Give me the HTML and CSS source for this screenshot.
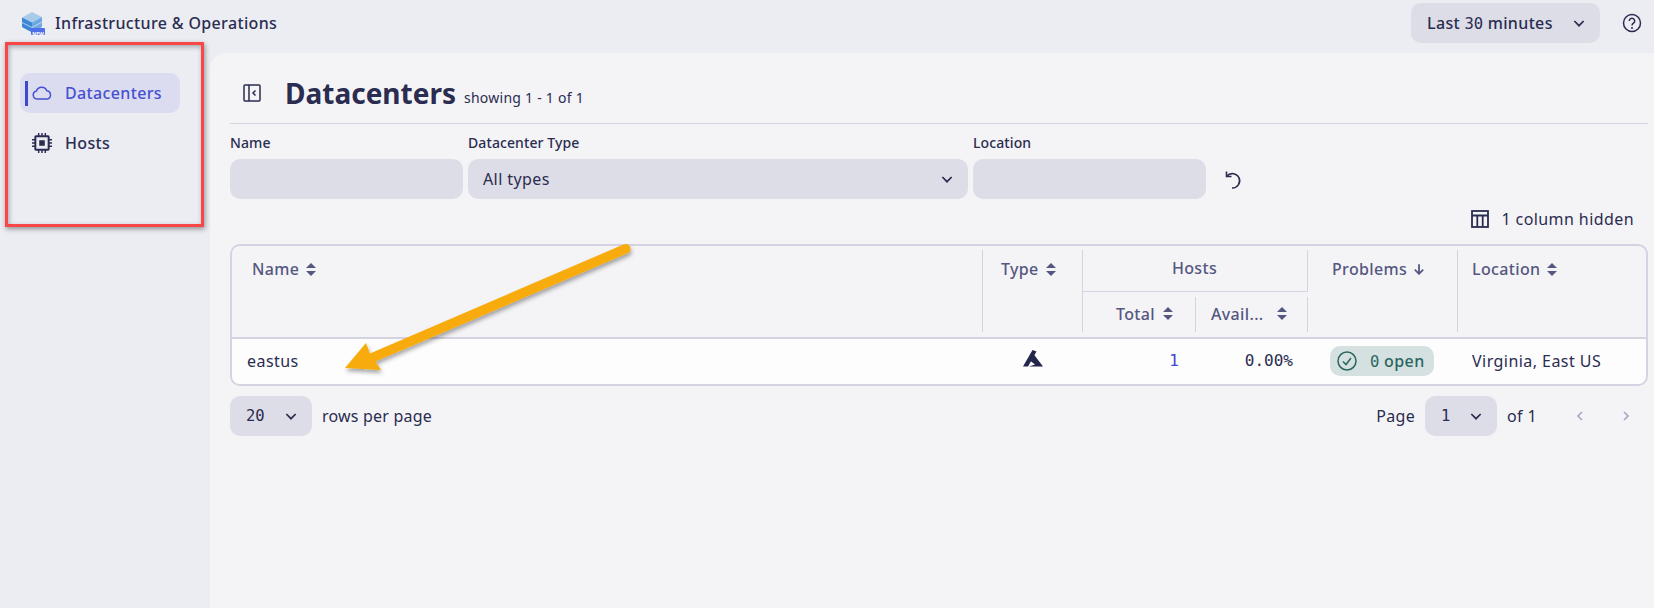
FILE: index.html
```html
<!DOCTYPE html>
<html lang="en">
<head>
<meta charset="utf-8">
<title>Infrastructure &amp; Operations</title>
<link rel="stylesheet" href="styles.css">
</head>
<body>
<header class="topbar">
  <div class="brand">
    <svg class="logo" viewBox="0 0 23 23" width="23" height="23">
      <path d="M0 5.500 10 0l10 5-10 5.500z" fill="#a8cbe8"/>
      <path d="M0 5.500l10 5v10L0 15z" fill="#3b86d6"/>
      <path d="M10 10.500l10-5.500v10l-10 5.500z" fill="#6ea8e2"/>
      <path d="M0 10.500l10 5 10-5.500" fill="none" stroke="#cfe2f4" stroke-width=".8"/>
      <rect x="9" y="16" width="14" height="7" rx="1" fill="#4f6fe8"/>
    </svg>
    <span class="new-tag">NEW</span>
    <span class="brand-name">Infrastructure &amp; Operations</span>
  </div>
  <div class="top-actions">
    <button class="select select-time"><span>Last <span class="mono">30</span> minutes</span>
      <svg class="chev" viewBox="0 0 12 12" width="16" height="16"><path d="M2.500 4.500 6 8l3.500-3.500" /></svg>
    </button>
    <svg class="help" viewBox="0 0 20 20" width="20" height="20">
      <circle cx="10" cy="10" r="8.500"/>
      <path d="M7.300 8a2.700 2.700 0 1 1 4.200 2.200c-1 .7-1.500 1.100-1.500 2.300"/>
      <circle class="dot" cx="10" cy="15" r="1"/>
    </svg>
  </div>
</header>
<div class="shell">
  <nav class="sidebar">
    <a class="nav-item active">
      <svg class="nav-icon" viewBox="0 0 20 14" width="20" height="14"><path d="M5 13a4 4 0 0 1-.6-7.900A5.500 5.500 0 0 1 14.800 4.800 4.200 4.200 0 0 1 15.500 13z"/></svg>
      <span>Datacenters</span>
    </a>
    <a class="nav-item">
      <svg class="nav-icon chip" viewBox="0 0 18 18" width="20" height="20">
        <rect x="3" y="3" width="12" height="12" rx=".5"/>
        <rect class="fill" x="6.500" y="6.500" width="5" height="5"/>
        <path d="M6 0v3M9 0v3M12 0v3M6 15v3M9 15v3M12 15v3M0 6h3M0 9h3M0 12h3M15 6h3M15 9h3M15 12h3"/>
      </svg>
      <span>Hosts</span>
    </a>
  </nav>
  <main class="main">
    <div class="title-row">
      <svg class="collapse" viewBox="0 0 18 18" width="18" height="18">
        <rect x="1" y="1" width="16" height="16" rx="1"/>
        <path d="M6 1v16M12.500 6.500 10 9l2.500 2.500"/>
      </svg>
      <h1>Datacenters</h1>
      <span class="showing">showing 1 - 1 of 1</span>
    </div>
    <div class="filters">
      <label class="field f-name"><span>Name</span><div class="input"></div></label>
      <label class="field f-type"><span>Datacenter Type</span>
        <div class="input input-select">All types
          <svg class="chev" viewBox="0 0 12 12" width="16" height="16"><path d="M2.500 4.500 6 8l3.500-3.500"/></svg>
        </div>
      </label>
      <label class="field f-name"><span>Location</span><div class="input"></div></label>
      <svg class="reset" viewBox="0 0 20 20" width="20" height="20">
        <path d="M3.500 1.500v5h5"/><path d="M3.800 6.300A7.200 7.200 0 1 1 9 18"/>
      </svg>
    </div>
    <div class="columns-row">
      <svg class="cols" viewBox="0 0 20 20" width="20" height="20">
        <rect x="2" y="2" width="16" height="16"/><path d="M2 6.500h16M7.300 6.500V18M12.700 6.500V18"/>
      </svg>
      <span>1 column hidden</span>
    </div>
    <div class="table-wrap">
      <table>
        <colgroup>
          <col class="c-name"><col class="c-type"><col class="c-total"><col class="c-avail"><col class="c-prob"><col>
        </colgroup>
        <thead>
          <tr>
            <th rowspan="2" class="sep"><span class="th-in first">Name <i class="sort"></i></span></th>
            <th rowspan="2" class="sep"><span class="th-in type">Type <i class="sort"></i></span></th>
            <th colspan="2" class="hosts sep">Hosts</th>
            <th rowspan="2" class="sep"><span class="th-in prob">Problems
              <svg class="down" viewBox="0 0 10 10" width="12" height="12"><path d="M5 1v8M1.500 5.500 5 9l3.500-3.500"/></svg></span></th>
            <th rowspan="2"><span class="th-in loc">Location <i class="sort"></i></span></th>
          </tr>
          <tr>
            <th class="sub sep"><span class="right">Total <i class="sort"></i></span></th>
            <th class="sub sep"><span class="between">Avail... <i class="sort"></i></span></th>
          </tr>
        </thead>
        <tbody>
          <tr>
            <td class="td-name">eastus</td>
            <td class="td-type">
              <svg viewBox="0 0 20 17" width="20" height="17"><path d="M9.500 0 0 16.500l5 0L13.500 1.500z" fill="#23254a"/><path d="M10.500 4 7.500 11l4.500 3.500-6 2h14z" fill="#23254a"/></svg>
            </td>
            <td class="num link mono">1</td>
            <td class="num mono">0.00%</td>
            <td class="td-prob"><span class="badge">
              <svg viewBox="0 0 20 20" width="20" height="20"><circle cx="10" cy="10" r="9"/><path d="M6 10.500 9 13.500 14 7"/></svg>
              <span class="badge-text"><span class="mono">0</span> open</span></span></td>
            <td class="td-loc">Virginia, East US</td>
          </tr>
        </tbody>
      </table>
    </div>
    <div class="pager">
      <button class="select select-rows"><span class="mono">20</span>
        <svg class="chev" viewBox="0 0 12 12" width="16" height="16"><path d="M2.500 4.500 6 8l3.500-3.500"/></svg>
      </button>
      <span class="rows-label">rows per page</span>
      <span class="spacer"></span>
      <span>Page</span>
      <button class="select select-page"><span class="mono">1</span>
        <svg class="chev" viewBox="0 0 12 12" width="16" height="16"><path d="M2.500 4.500 6 8l3.500-3.500"/></svg>
      </button>
      <span>of 1</span>
      <svg class="pg prev" viewBox="0 0 12 12" width="12" height="12"><path d="M8 2 4 6l4 4"/></svg>
      <svg class="pg next" viewBox="0 0 12 12" width="12" height="12"><path d="M4 2l4 4-4 4"/></svg>
    </div>
  </main>
</div>
<div class="callout-box"></div>
<svg class="arrow" viewBox="0 0 1654 608" width="1654" height="608">
  <defs><filter id="sh" x="-10%" y="-10%" width="120%" height="130%"><feDropShadow dx="1" dy="3" stdDeviation="2" flood-color="#000" flood-opacity=".35"/></filter></defs>
  <path filter="url(#sh)" d="M623.500 244.500 370 353.500 366 343 345 368 381 370 375.500 361.500 628 253a4.800 4.800 0 0 0-4.500-8.500z" fill="#f8ab08"/>
</svg>
</body>
</html>
```
FILE: styles.css
```css
* { box-sizing: border-box; }
html, body { margin: 0; height: 100%; }
body {
  position: relative;
  width: 1654px;
  height: 608px;
  overflow: hidden;
  background: #ecedf3;
  color: #2a2c50;
  font-family: "Noto Sans", "Open Sans", sans-serif;
  font-size: 16px;
  letter-spacing: .35px;
  display: flex;
  flex-direction: column;
}
svg { display: block; flex: none; fill: none; stroke: currentColor; }
.arrow, .logo, .td-type svg { stroke: none; }
.mono { font-family: "DejaVu Sans Mono", monospace; font-size: 15.500px; letter-spacing: 0; }

.topbar {
  height: 53px;
  flex: none;
  display: flex;
  align-items: flex-start;
  justify-content: space-between;
  padding: 3px 12px 0 22px;
}
.brand { display: flex; align-items: center; position: relative; height: 40px; }
.new-tag {
  position: absolute;
  left: 9px;
  top: 28px;
  width: 14px;
  color: #fff;
  font-size: 5px;
  line-height: 7px;
  text-align: center;
  font-weight: 700;
  letter-spacing: 0;
}
.brand-name { margin-left: 10px; font-weight: 500; }
.top-actions { display: flex; align-items: center; gap: 22px; }
.select {
  display: flex;
  align-items: center;
  justify-content: space-between;
  height: 40px;
  border: 0;
  border-radius: 10px;
  background: #dddde7;
  color: inherit;
  font: inherit;
  letter-spacing: inherit;
  font-weight: 500;
  padding: 0 13px 0 16px;
}
.select-time { width: 189px; }
.chev path { stroke-width: 1.300; }
.help path, .help circle { stroke-width: 1.500; }
.help .dot { fill: currentColor; stroke: none; }

.shell { flex: 1; display: flex; min-height: 0; }
.sidebar { width: 210px; flex: none; padding: 20px 30px 0 20px; display: flex; flex-direction: column; gap: 10px; }
.nav-item {
  position: relative;
  display: flex;
  align-items: center;
  gap: 13px;
  height: 40px;
  padding-left: 12px;
  border-radius: 10px;
  font-weight: 500;
}
.nav-item.active { background: #dcdcf0; color: #4650d0; }
.nav-item.active::before {
  content: "";
  position: absolute;
  left: 5px;
  top: 8px;
  bottom: 7px;
  width: 3px;
  background: #3f48cc;
}
.nav-icon path, .nav-icon rect { stroke-width: 1.500; }
.chip path { stroke-width: 1.300; }
.chip rect { stroke-width: 1.800; }
.chip .fill { fill: currentColor; stroke: none; }

.main {
  flex: 1;
  min-width: 0;
  background: #f4f4f7;
  border-top-left-radius: 16px;
  padding: 0 6px 0 20px;
}
.title-row {
  display: flex;
  align-items: center;
  height: 71px;
  padding: 10px 0 0 13px;
  border-bottom: 1px solid #d3d3e2;
}
.collapse path, .collapse rect { stroke-width: 1.500; }
h1 { margin: 0 0 0 24px; font-size: 28px; line-height: 40px; font-weight: 700; letter-spacing: 0; }
.showing { margin: 9px 0 0 8px; font-size: 14px; letter-spacing: .25px; }

.filters { display: flex; gap: 5px; align-items: flex-end; padding-top: 9px; }
.field { display: flex; flex-direction: column; gap: 7px; font-size: 14px; letter-spacing: .1px; font-weight: 500; }
.field > span { line-height: 19px; }
.f-name { width: 233px; }
.f-type { width: 500px; }
.input { height: 40px; border-radius: 10px; background: #dddde7; }
.input-select {
  display: flex;
  align-items: center;
  justify-content: space-between;
  padding: 0 13px 0 15px;
  font-size: 16px;
  letter-spacing: .4px;
  font-weight: 400;
}
.reset { margin: 0 0 9px 12px; }
.reset path { stroke-width: 1.600; }

.columns-row { display: flex; align-items: center; justify-content: flex-end; gap: 11px; height: 45px; padding: 1px 14px 6px 0; letter-spacing: .42px; }
.cols path, .cols rect { stroke-width: 1.800; }

.table-wrap { border: 2px solid #d3d3e2; border-radius: 10px; overflow: hidden; }
table { width: 100%; border-collapse: collapse; table-layout: fixed; }
.c-name { width: 751px; }
.c-type { width: 100px; }
.c-total { width: 113px; }
.c-avail { width: 112px; }
.c-prob { width: 150px; }
th { position: relative; padding: 0; font-weight: 500; font-size: 16px; color: #54577f; text-align: left; vertical-align: top; }
thead tr:first-child th { height: 45px; }
thead tr:last-child th { height: 47px; }
.sep::after {
  content: "";
  position: absolute;
  right: 0;
  top: 4px;
  bottom: 5px;
  width: 1px;
  background: #d3d3e2;
}
.sep.sub::after { top: 5px; }
.sep.hosts::after { top: 4px; bottom: 0; }
.hosts { text-align: center; padding-top: 11px; padding-right: 2px; border-bottom: 1px solid #d3d3e2; }
.th-in { display: flex; align-items: center; gap: 7px; padding-top: 12px; }
.first { padding-left: 20px; }
.type { padding-left: 18px; }
.prob { padding-left: 24px; gap: 6px; }
.loc { padding-left: 14px; }
.right { display: flex; align-items: center; justify-content: flex-end; gap: 8px; padding: 11px 23px 0 0; }
.between { display: flex; align-items: center; justify-content: space-between; padding: 11px 21px 0 15px; }
.sort { display: inline-block; position: relative; width: 10px; height: 13px; flex: none; }
.sort::before, .sort::after {
  content: "";
  position: absolute;
  left: 0;
  border-left: 5px solid transparent;
  border-right: 5px solid transparent;
}
.sort::before { top: 0; border-bottom: 5.500px solid #54577f; }
.sort::after { bottom: 0; border-top: 5.500px solid #54577f; }
.down path { stroke-width: 1.500; }

thead { border-bottom: 2px solid #d3d3e2; }
td { height: 46px; padding: 0 0 2px; background: #fdfdfe; letter-spacing: .45px; }
.td-name { padding-left: 15px; }
.td-type svg { margin: 0 auto 5px; }
.num { text-align: right; padding-right: 15px; }
.link { color: #3f48cc; padding-right: 17px; }
td.mono { font-size: 16px; }
.td-prob { padding-left: 22px; }
.badge {
  display: inline-flex;
  align-items: center;
  height: 30px;
  width: 104px;
  padding: 0 7px;
  gap: 13px;
  border-radius: 10px;
  background: #d5e0e1;
  color: #2a6660;
  font-weight: 500;
  vertical-align: middle;
}
.badge path, .badge circle { stroke-width: 1.500; }
.badge-text { white-space: nowrap; }
.td-loc { padding-left: 14px; }

.pager { display: flex; align-items: center; height: 40px; margin-top: 10px; }
.select-rows { width: 82px; }
.rows-label { margin-left: 10px; letter-spacing: .2px; }
.spacer { flex: 1; }
.select-page { width: 72px; margin: 0 10px; }
.pg path { stroke-width: 1.600; }
.pg { color: #a3a5c0; }
.prev { margin-left: 37px; }
.next { margin: 0 16px 0 34px; }

.callout-box {
  position: absolute;
  left: 5px;
  top: 42px;
  width: 199px;
  height: 185px;
  border: 3px solid #f94646;
  box-shadow: 1px 2px 5px rgba(0, 0, 0, .4), inset 1px 2px 5px rgba(0, 0, 0, .3);
}
.arrow { position: absolute; left: 0; top: 0; pointer-events: none; }
```
